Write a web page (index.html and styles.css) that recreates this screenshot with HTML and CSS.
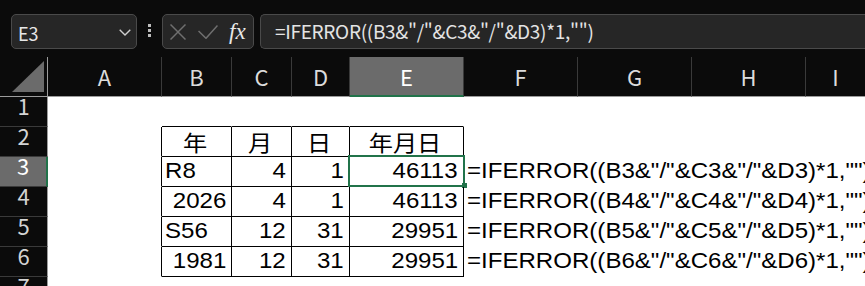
FILE: index.html
```html
<!DOCTYPE html>
<html lang="ja">
<head>
  <meta charset="UTF-8" />
  <title>Excel E3</title>
  <link rel="stylesheet" href="styles.css">
</head>
<body>
  <div class="app">

    <div class="toolbar">
      <div class="namebox">
        <span class="ref">E3</span>
        <svg class="chev" width="12" height="7" viewBox="0 0 12 7">
          <polyline points="0.7,0.7 6,6 11.3,0.7" fill="none" stroke="#cfcfcf" stroke-width="1.4"/>
        </svg>
      </div>
      <div class="grip"><i></i><i></i><i></i></div>
      <div class="fxbox">
        <svg class="ico-x" width="16" height="16" viewBox="0 0 16 16">
          <line x1="0.5" y1="0.5" x2="15.5" y2="15.5" stroke="#6f6f6f" stroke-width="1.5"/>
          <line x1="15.5" y1="0.5" x2="0.5" y2="15.5" stroke="#6f6f6f" stroke-width="1.5"/>
        </svg>
        <svg class="ico-ok" width="20" height="14" viewBox="0 0 20 14">
          <polyline points="0.5,6 8,13.3 19.5,0.5" fill="none" stroke="#6f6f6f" stroke-width="1.5"/>
        </svg>
        <span class="fx">fx</span>
      </div>
      <div class="formula">=IFERROR((B3&amp;"/"&amp;C3&amp;"/"&amp;D3)*1,"")</div>
    </div>

    <div class="colheads">
      <div class="corner">
        <svg width="47" height="39" viewBox="0 0 47 39">
          <polygon points="44,4 44,35 12,35" fill="#6b6b6b"/>
        </svg>
      </div>
      <div class="ch w114">A</div>
      <div class="ch w70">B</div>
      <div class="ch w60">C</div>
      <div class="ch w58">D</div>
      <div class="ch w114 sel">E</div>
      <div class="ch w114">F</div>
      <div class="ch w114">G</div>
      <div class="ch w114">H</div>
      <div class="ch last">I</div>
    </div>

    <div class="sheet">
      <div class="rowheads">
        <div class="rh">1</div>
        <div class="rh">2</div>
        <div class="rh sel">3</div>
        <div class="rh">4</div>
        <div class="rh">5</div>
        <div class="rh">6</div>
        <div class="rh">7</div>
      </div>

      <div class="grid">
        <!-- row 1 -->
        <div class="c"></div>
        <div class="c bb"></div>
        <div class="c bb"></div>
        <div class="c bb"></div>
        <div class="c bb"></div>
        <div class="c"></div>

        <!-- row 2 -->
        <div class="c br"></div>
        <div class="c br bb jp"><span class="t">年</span></div>
        <div class="c br bb jp"><span class="t">月</span></div>
        <div class="c br bb jp"><span class="t">日</span></div>
        <div class="c br bb jp"><span class="t">年月日</span></div>
        <div class="c"></div>

        <!-- row 3 -->
        <div class="c br"></div>
        <div class="c br bb"><span class="t">R8</span></div>
        <div class="c br bb num"><span class="t">4</span></div>
        <div class="c br bb num"><span class="t">1</span></div>
        <div class="c br bb num cur"><span class="t">46113</span><i class="selbox"></i><i class="handle"></i></div>
        <div class="c"><span class="t">=IFERROR((B3&amp;"/"&amp;C3&amp;"/"&amp;D3)*1,"")</span></div>

        <!-- row 4 -->
        <div class="c br"></div>
        <div class="c br bb num"><span class="t">2026</span></div>
        <div class="c br bb num"><span class="t">4</span></div>
        <div class="c br bb num"><span class="t">1</span></div>
        <div class="c br bb num"><span class="t">46113</span></div>
        <div class="c"><span class="t">=IFERROR((B4&amp;"/"&amp;C4&amp;"/"&amp;D4)*1,"")</span></div>

        <!-- row 5 -->
        <div class="c br"></div>
        <div class="c br bb"><span class="t">S56</span></div>
        <div class="c br bb num"><span class="t">12</span></div>
        <div class="c br bb num"><span class="t">31</span></div>
        <div class="c br bb num"><span class="t">29951</span></div>
        <div class="c"><span class="t">=IFERROR((B5&amp;"/"&amp;C5&amp;"/"&amp;D5)*1,"")</span></div>

        <!-- row 6 -->
        <div class="c br"></div>
        <div class="c br bb num"><span class="t">1981</span></div>
        <div class="c br bb num"><span class="t">12</span></div>
        <div class="c br bb num"><span class="t">31</span></div>
        <div class="c br bb num"><span class="t">29951</span></div>
        <div class="c"><span class="t">=IFERROR((B6&amp;"/"&amp;C6&amp;"/"&amp;D6)*1,"")</span></div>
      </div>
    </div>

  </div>
</body>
</html>
```

FILE: styles.css
```css
body {
  margin: 0;
  background-color: #fff;
  overflow: hidden;
}

.app {
  width: 865px;
  height: 286px;
  display: flex;
  flex-direction: column;
  overflow: hidden;
  font-family: "Noto Sans CJK JP", "Noto Sans", sans-serif;
}

/* formula bar */
.toolbar {
  height: 57px;
  flex-shrink: 0;
  box-sizing: border-box;
  padding: 14px 0 0 11px;
  background-color: #0b0b0b;
  display: flex;
  align-items: flex-start;
}

.namebox,
.fxbox,
.formula {
  height: 35px;
  box-sizing: border-box;
  border: 1px solid #4a4a4a;
  border-radius: 5px;
  background-color: #262626;
}

.namebox {
  width: 126px;
  margin-right: 11px;
  padding: 0 5px 0 6px;
  display: flex;
  align-items: center;
  justify-content: space-between;
}

.ref {
  font-size: 18px;
  color: #e8e8e8;
  padding-top: 3px;
}

.chev {
  margin-top: 1px;
}

.grip {
  width: 3px;
  margin: 10px 11px 0 0;
  display: flex;
  flex-direction: column;
  gap: 2px;
}

.grip i {
  display: block;
  width: 3px;
  height: 3px;
  background-color: #bdbdbd;
}

.fxbox {
  width: 92px;
  display: flex;
  align-items: center;
  padding-left: 7px;
}

.ico-x {
  margin-right: 12px;
}

.ico-ok {
  margin-right: 11px;
  margin-top: 1px;
}

.fx {
  font-family: "Liberation Serif", "DejaVu Serif", serif;
  font-style: italic;
  font-size: 23px;
  color: #e8e8e8;
  line-height: 30px;
}

.formula {
  flex: 1;
  margin-left: 6px;
  margin-right: -12px;
  border-right: none;
  border-radius: 5px 0 0 5px;
  padding-left: 14px;
  font-size: 19px;
  letter-spacing: -0.3px;
  line-height: 32px;
  color: #e4e4e4;
  white-space: nowrap;
}

/* column headers */
.colheads {
  height: 40px;
  flex-shrink: 0;
  display: flex;
  background-color: #0b0b0b;
}

.corner {
  width: 48px;
  box-sizing: border-box;
  border-right: 1px solid #9c9c9c;
  border-bottom: 1px solid #9c9c9c;
}

.corner svg {
  display: block;
}

.ch {
  box-sizing: border-box;
  flex-shrink: 0;
  border-right: 1px solid #3a3a3a;
  border-bottom: 1px solid #9c9c9c;
  text-align: center;
  font-size: 22px;
  line-height: 39px;
  color: #dcdcdc;
}

.w114 { width: 114px; }
.w70 { width: 70px; }
.w60 { width: 60px; }
.w58 { width: 58px; }

.ch.last {
  flex: 1;
  border-right: none;
}

.ch.sel {
  background-color: #6b6b6b;
  color: #fff;
  border-bottom: 2px solid #21734a;
  line-height: 38px;
}

/* sheet */
.sheet {
  flex: 1;
  display: flex;
  min-height: 0;
}

.rowheads {
  width: 48px;
  flex-shrink: 0;
  background-color: #0b0b0b;
}

.rh {
  height: 30px;
  box-sizing: border-box;
  border-bottom: 1px solid #3a3a3a;
  border-right: 1px solid #9c9c9c;
  text-align: center;
  font-size: 22px;
  line-height: 17px;
  color: #d4d4d4;
}

.rh.sel {
  background-color: #6b6b6b;
  color: #fff;
  border-right: 2px solid #21734a;
}

.grid {
  flex: 1;
  display: grid;
  grid-template-columns: 114px 70px 60px 58px 114px minmax(0, 1fr);
  grid-auto-rows: 30px;
  align-content: start;
  background-color: #fff;
}

.c {
  position: relative;
  box-sizing: border-box;
  border-right: 1px solid transparent;
  border-bottom: 1px solid transparent;
  padding: 0 5px 0 3px;
  font-family: "Liberation Sans", Arial, sans-serif;
  font-size: 21.3px;
  line-height: 29px;
  color: #000;
  white-space: nowrap;
}

.bb { border-bottom-color: #000; }
.br { border-right-color: #000; }

.num {
  text-align: right;
}

.t {
  display: inline-block;
  transform: scaleX(1.13);
  transform-origin: left center;
}

.num .t {
  transform-origin: right center;
}

.jp {
  text-align: center;
  font-family: "Noto Sans CJK JP", sans-serif;
  font-size: 22px;
}

.jp .t {
  transform: scaleX(1.1);
  transform-origin: center;
}

.selbox {
  position: absolute;
  top: -2px;
  left: -2px;
  right: -2px;
  bottom: -1px;
  border: 2px solid #21734a;
}

.handle {
  position: absolute;
  right: -4px;
  bottom: -2px;
  width: 5px;
  height: 5px;
  background-color: #21734a;
}
```
